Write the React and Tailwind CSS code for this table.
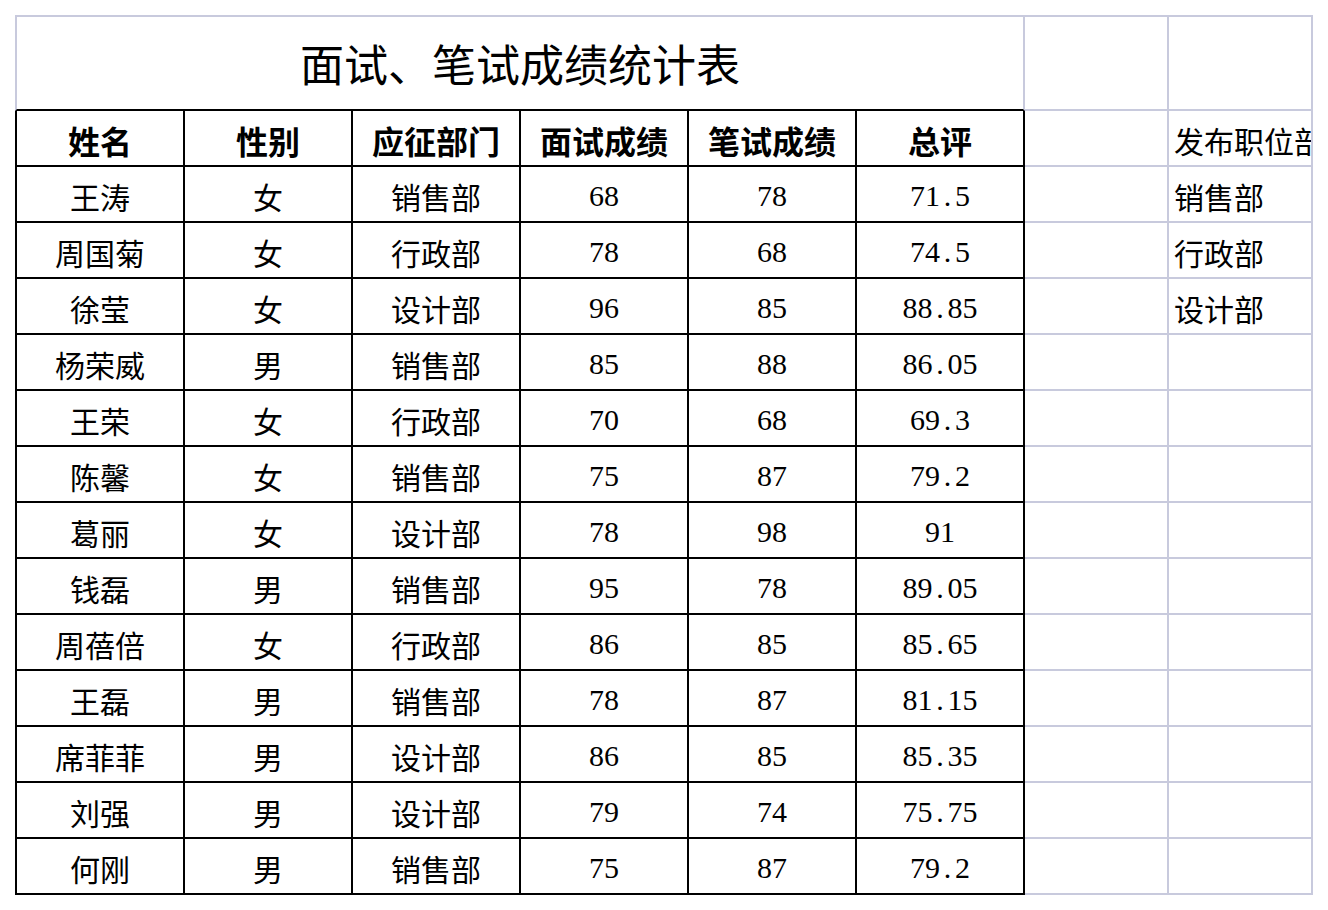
import React from "react";

const rows = [
  ["王涛", "女", "销售部", "68", "78", "71.5"],
  ["周国菊", "女", "行政部", "78", "68", "74.5"],
  ["徐莹", "女", "设计部", "96", "85", "88.85"],
  ["杨荣威", "男", "销售部", "85", "88", "86.05"],
  ["王荣", "女", "行政部", "70", "68", "69.3"],
  ["陈馨", "女", "销售部", "75", "87", "79.2"],
  ["葛丽", "女", "设计部", "78", "98", "91"],
  ["钱磊", "男", "销售部", "95", "78", "89.05"],
  ["周蓓倍", "女", "行政部", "86", "85", "85.65"],
  ["王磊", "男", "销售部", "78", "87", "81.15"],
  ["席菲菲", "男", "设计部", "86", "85", "85.35"],
  ["刘强", "男", "设计部", "79", "74", "75.75"],
  ["何刚", "男", "销售部", "75", "87", "79.2"],
];

const side = ["发布职位部", "销售部", "行政部", "设计部"];

const cjk = { fontFamily: '"Noto Sans CJK SC", sans-serif' };
const num = { fontFamily: '"Liberation Serif", serif' };

function Num({ v }) {
  const parts = v.split(".");
  return (
    <span style={num} className="text-[30px] leading-none text-black">
      {parts[0]}
      {parts.length > 1 && (
        <>
          <span className="inline-block w-[15px] text-center">.</span>
          {parts[1]}
        </>
      )}
    </span>
  );
}

export default function App() {
  const header = ["姓名", "性别", "应征部门", "面试成绩", "笔试成绩", "总评"];
  const cells = [];

  cells.push(
    <div
      key="title"
      className="col-span-6 flex items-center justify-center border-t-2 border-l-2 border-r-2 border-b-2 border-t-[#c8cadd] border-l-[#c8cadd] border-r-[#c8cadd] border-b-black"
      style={cjk}
    >
      <span className="text-[44px] leading-none text-black">面试、笔试成绩统计表</span>
    </div>
  );
  cells.push(<div key="t7" className="border-t-2 border-r-2 border-b-2 border-[#c8cadd]" />);
  cells.push(<div key="t8" className="border-t-2 border-r-2 border-b-2 border-[#c8cadd]" />);

  header.forEach((h, i) => {
    cells.push(
      <div
        key={"h" + i}
        className={
          "flex items-center justify-center border-r-2 border-b-2 border-black pt-[3px] " +
          (i === 0 ? "border-l-2" : "")
        }
        style={cjk}
      >
        <span className="text-[32px] font-bold leading-none text-black">{h}</span>
      </div>
    );
  });
  cells.push(<div key="h7" className="border-r-2 border-b-2 border-[#c8cadd]" />);
  cells.push(
    <div
      key="h8"
      className="flex items-center overflow-hidden whitespace-nowrap border-r-2 border-b-2 border-[#c8cadd] pl-[5px] pt-[3px]"
      style={cjk}
    >
      <span className="text-[30px] leading-none text-black">{side[0]}</span>
    </div>
  );

  rows.forEach((r, ri) => {
    r.forEach((v, ci) => {
      cells.push(
        <div
          key={ri + "-" + ci}
          className={
            "flex items-center justify-center border-r-2 border-b-2 border-black pt-[3px] " +
            (ci === 0 ? "border-l-2" : "")
          }
          style={cjk}
        >
          {ci >= 3 ? (
            <Num v={v} />
          ) : (
            <span className="text-[30px] leading-none text-black">{v}</span>
          )}
        </div>
      );
    });
    cells.push(<div key={ri + "-7"} className="border-r-2 border-b-2 border-[#c8cadd]" />);
    cells.push(
      <div
        key={ri + "-8"}
        className="flex items-center overflow-hidden whitespace-nowrap border-r-2 border-b-2 border-[#c8cadd] pl-[5px] pt-[3px]"
        style={cjk}
      >
        {side[ri + 1] && (
          <span className="text-[30px] leading-none text-black">{side[ri + 1]}</span>
        )}
      </div>
    );
  });

  return (
    <div className="h-[910px] w-[1328px] bg-white pl-[15px] pt-[15px]">
      <div className="grid grid-cols-[170px_168px_168px_168px_168px_168px_144px_144px] grid-rows-[96px_repeat(14,56px)]">
        {cells}
      </div>
    </div>
  );
}
